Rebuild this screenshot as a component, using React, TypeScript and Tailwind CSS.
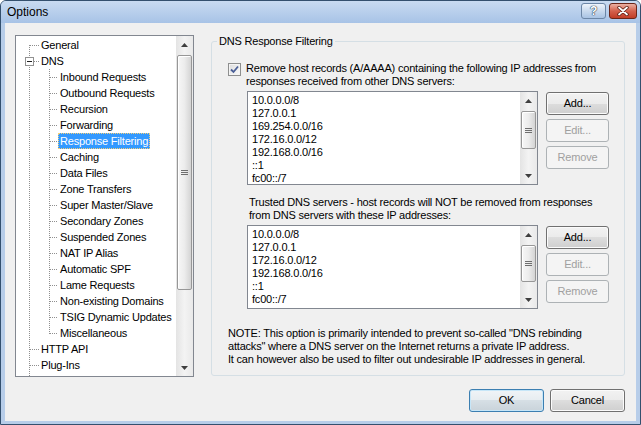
import React from "react";

type TreeNode = { label: string; level: 0 | 1; first?: boolean; open?: boolean; last?: boolean; selected?: boolean };

const nodes: TreeNode[] = [
  { label: "General", level: 0, first: true },
  { label: "DNS", level: 0, open: true },
  { label: "Inbound Requests", level: 1 },
  { label: "Outbound Requests", level: 1 },
  { label: "Recursion", level: 1 },
  { label: "Forwarding", level: 1 },
  { label: "Response Filtering", level: 1, selected: true },
  { label: "Caching", level: 1 },
  { label: "Data Files", level: 1 },
  { label: "Zone Transfers", level: 1 },
  { label: "Super Master/Slave", level: 1 },
  { label: "Secondary Zones", level: 1 },
  { label: "Suspended Zones", level: 1 },
  { label: "NAT IP Alias", level: 1 },
  { label: "Automatic SPF", level: 1 },
  { label: "Lame Requests", level: 1 },
  { label: "Non-existing Domains", level: 1 },
  { label: "TSIG Dynamic Updates", level: 1 },
  { label: "Miscellaneous", level: 1, last: true },
  { label: "HTTP API", level: 0 },
  { label: "Plug-Ins", level: 0 },
  { label: "Advanced", level: 0 },
];

const blocked = ["10.0.0.0/8", "127.0.0.1", "169.254.0.0/16", "172.16.0.0/12", "192.168.0.0/16", "::1", "fc00::/7"];
const trusted = ["10.0.0.0/8", "127.0.0.1", "172.16.0.0/12", "192.168.0.0/16", "::1", "fc00::/7", "fe80::/10"];

const DOT = "#8f8f8f";

export default function App() {
  return (
    <div className="font-['Liberation_Sans',Arial,sans-serif] text-[11px] tracking-[-0.2px] text-black">
      <div className="flex h-[425px] w-[641px] flex-col rounded-t-[6px] border border-[#34506e] bg-[#b7cde9]">
        {/* title bar */}
        <div className="flex h-[22px] shrink-0 items-center justify-between rounded-t-[5px] bg-gradient-to-b from-[#c9dbf1] to-[#a8c3e6] pl-[6px] pr-[3px]">
          <span className="text-[12px] tracking-normal">Options</span>
          <div className="flex items-center gap-[3px] pb-[2px]">
            <div className="flex h-[16px] w-[25px] items-center justify-center rounded-[3px] border border-[#6c86a6] bg-gradient-to-b from-[#eef4fb] via-[#c9daee] to-[#a9c3e3] text-[12px] font-bold leading-none text-white [text-shadow:0_0_1px_#2c3e55,0_0_1px_#2c3e55,0_0_1px_#2c3e55]">
              ?
            </div>
            <div className="flex h-[16px] w-[28px] items-center justify-center rounded-[3px] border border-[#6b2619] bg-gradient-to-b from-[#eab1a4] via-[#d3604c] to-[#c13d26]">
              <svg width="12" height="10" viewBox="0 0 12 10">
                <path d="M2 1.5 L10 8.5 M10 1.5 L2 8.5" stroke="#5a1d12" strokeWidth="3.4" strokeLinecap="round" />
                <path d="M2 1.5 L10 8.5 M10 1.5 L2 8.5" stroke="#fff" strokeWidth="1.8" strokeLinecap="round" />
              </svg>
            </div>
          </div>
        </div>

        {/* client */}
        <div className="mx-[4px] mb-[3px] flex flex-1 flex-col bg-[#f0f0f0] pl-[10px] pr-[11px] pt-[12px]">
          <div className="flex items-start gap-[17px]">
            <Tree />
            <fieldset className="h-[341px] w-[414px] rounded-[3px] border border-[#d5dfe5]">
              <legend className="ml-[5px] px-[2px] leading-[13px]">DNS Response Filtering</legend>
              <div className="flex flex-col pl-[16px] pt-[14px]">
                <div className="flex items-start gap-[5px]">
                  <CheckBox />
                  <p className="leading-[13px]">
                    Remove host records (A/AAAA) containing the following IP addresses from
                    <br />
                    responses received from other DNS servers:
                  </p>
                </div>
                <div className="ml-[19px] mt-[3px] flex gap-[8px]">
                  <IpList items={blocked} h="h-[94px]" thumb="mt-[2px] h-[38px]" />
                  <ButtonCol />
                </div>
                <p className="ml-[21px] mt-[11px] leading-[13px]">
                  Trusted DNS servers - host records will NOT be removed from responses
                  <br />
                  from DNS servers with these IP addresses:
                </p>
                <div className="ml-[19px] mt-[3px] flex gap-[8px]">
                  <IpList items={trusted} h="h-[84px]" thumb="mt-[2px] h-[37px]" />
                  <ButtonCol />
                </div>
                <p className="mt-[18px] leading-[13px]">
                  NOTE: This option is primarily intended to prevent so-called "DNS rebinding
                  <br />
                  attacks" where a DNS server on the Internet returns a private IP address.
                  <br />
                  It can however also be used to filter out undesirable IP addresses in general.
                </p>
              </div>
            </fieldset>
          </div>
          <div className="mt-[12px] flex justify-end gap-[6px]">
            <Btn def className="w-[75px]">OK</Btn>
            <Btn className="w-[75px]">Cancel</Btn>
          </div>
        </div>
      </div>
    </div>
  );
}

function Tree() {
  return (
    <div className="flex h-[342px] w-[179px] shrink-0 border border-[#828790] bg-white">
      <div className="flex-1 overflow-hidden pt-[1px]">
        {nodes.map((n) => (
          <div key={n.label} className="flex h-[16px] items-center whitespace-nowrap">
            <Connectors n={n} />
            {n.selected ? (
              <span className="h-[16px] border border-dotted border-[#f3cf78] bg-[#3399ff] px-[1px] leading-[14px] text-white">{n.label}</span>
            ) : (
              <span className="px-[2px] leading-[16px]">{n.label}</span>
            )}
          </div>
        ))}
      </div>
      <VScroll thumb="mt-[2px] h-[235px]" />
    </div>
  );
}

function Connectors({ n }: { n: TreeNode }) {
  const w = n.level === 0 ? 23 : 42;
  return (
    <svg width={w} height={16} className="shrink-0" shapeRendering="crispEdges">
      <g stroke={DOT} strokeDasharray="1 1">
        <line x1={13.5} x2={13.5} y1={n.first ? 8 : 0} y2={16} />
        {n.level === 1 && <line x1={33.5} x2={33.5} y1={0} y2={n.last ? 9 : 16} />}
        {n.level === 0 ? (
          <line x1={n.open ? 18 : 14} x2={23} y1={8.5} y2={8.5} />
        ) : (
          <line x1={34} x2={42} y1={8.5} y2={8.5} />
        )}
      </g>
      {n.open && (
        <g>
          <rect x={9.5} y={4.5} width={8} height={8} fill="#fff" stroke="#919191" />
          <line x1={11} x2={16} y1={8.5} y2={8.5} stroke="#1e1e1e" />
        </g>
      )}
    </svg>
  );
}

function VScroll({ thumb }: { thumb: string }) {
  return (
    <div className="flex w-[17px] shrink-0 flex-col bg-gradient-to-r from-[#e4e4e4] via-[#f3f3f3] to-[#e9e9e9]">
      <div className="flex h-[17px] items-center justify-center">
        <svg width="7" height="4"><polygon points="0,4 3.5,0 7,4" fill="#3f3f3f" /></svg>
      </div>
      <div className="flex-1 px-[1px]">
        <div className={`${thumb} flex items-center justify-center rounded-[2px] border border-[#979797] bg-gradient-to-r from-[#f7f7f7] via-[#ececec] to-[#d4d4d4] shadow-[inset_1px_1px_0_#ffffff]`}>
          <div className="flex flex-col gap-[1px]">
            <div className="h-[1px] w-[7px] bg-[#6e6e6e]" />
            <div className="h-[1px] w-[7px] bg-[#6e6e6e]" />
            <div className="h-[1px] w-[7px] bg-[#6e6e6e]" />
          </div>
        </div>
      </div>
      <div className="flex h-[17px] items-center justify-center">
        <svg width="7" height="4"><polygon points="0,0 7,0 3.5,4" fill="#3f3f3f" /></svg>
      </div>
    </div>
  );
}

function IpList({ items, h, thumb }: { items: string[]; h: string; thumb: string }) {
  return (
    <div className={`flex w-[291px] shrink-0 border border-[#828790] bg-white ${h}`}>
      <div className="flex-1 overflow-hidden pl-[4px] pt-[2px] leading-[13px]">
        {items.map((ip) => (
          <div key={ip}>{ip}</div>
        ))}
      </div>
      <VScroll thumb={thumb} />
    </div>
  );
}

function ButtonCol() {
  return (
    <div className="mt-[1px] flex flex-col gap-[4px]">
      <Btn className="w-[63px]">Add...</Btn>
      <Btn disabled className="w-[63px]">Edit...</Btn>
      <Btn disabled className="w-[63px]">Remove</Btn>
    </div>
  );
}

function Btn({ children, disabled, def, className }: { children: React.ReactNode; disabled?: boolean; def?: boolean; className?: string }) {
  const look = disabled
    ? "border-[#adb2b5] bg-[#f4f4f4] text-[#a0a0a0]"
    : def
      ? "border-[#3c7fb1] bg-[linear-gradient(#f0f4f7,#e6ecf0_50%,#d6dfe5_50%,#c9d3da)] shadow-[inset_0_0_0_1px_#c6e6f8]"
      : "border-[#707070] bg-[linear-gradient(#f2f2f2,#ebebeb_50%,#dddddd_50%,#cfcfcf)] shadow-[inset_0_0_0_1px_#fbfbfb]";
  return (
    <div className={`flex h-[23px] items-center justify-center rounded-[3px] border ${look} ${className ?? ""}`}>
      {children}
    </div>
  );
}

function CheckBox() {
  return (
    <div className="mt-[1px] flex h-[13px] w-[13px] shrink-0 items-center justify-center border border-[#8e8f8f] bg-gradient-to-br from-[#dcdcdc] to-[#fbfbfb] shadow-[inset_0_0_0_1px_#f4f4f4]">
      <svg width="9" height="9" viewBox="0 0 9 9">
        <path d="M1 4.5 L3.5 7 L8 1.5" fill="none" stroke="#4a5f97" strokeWidth="1.8" />
      </svg>
    </div>
  );
}
